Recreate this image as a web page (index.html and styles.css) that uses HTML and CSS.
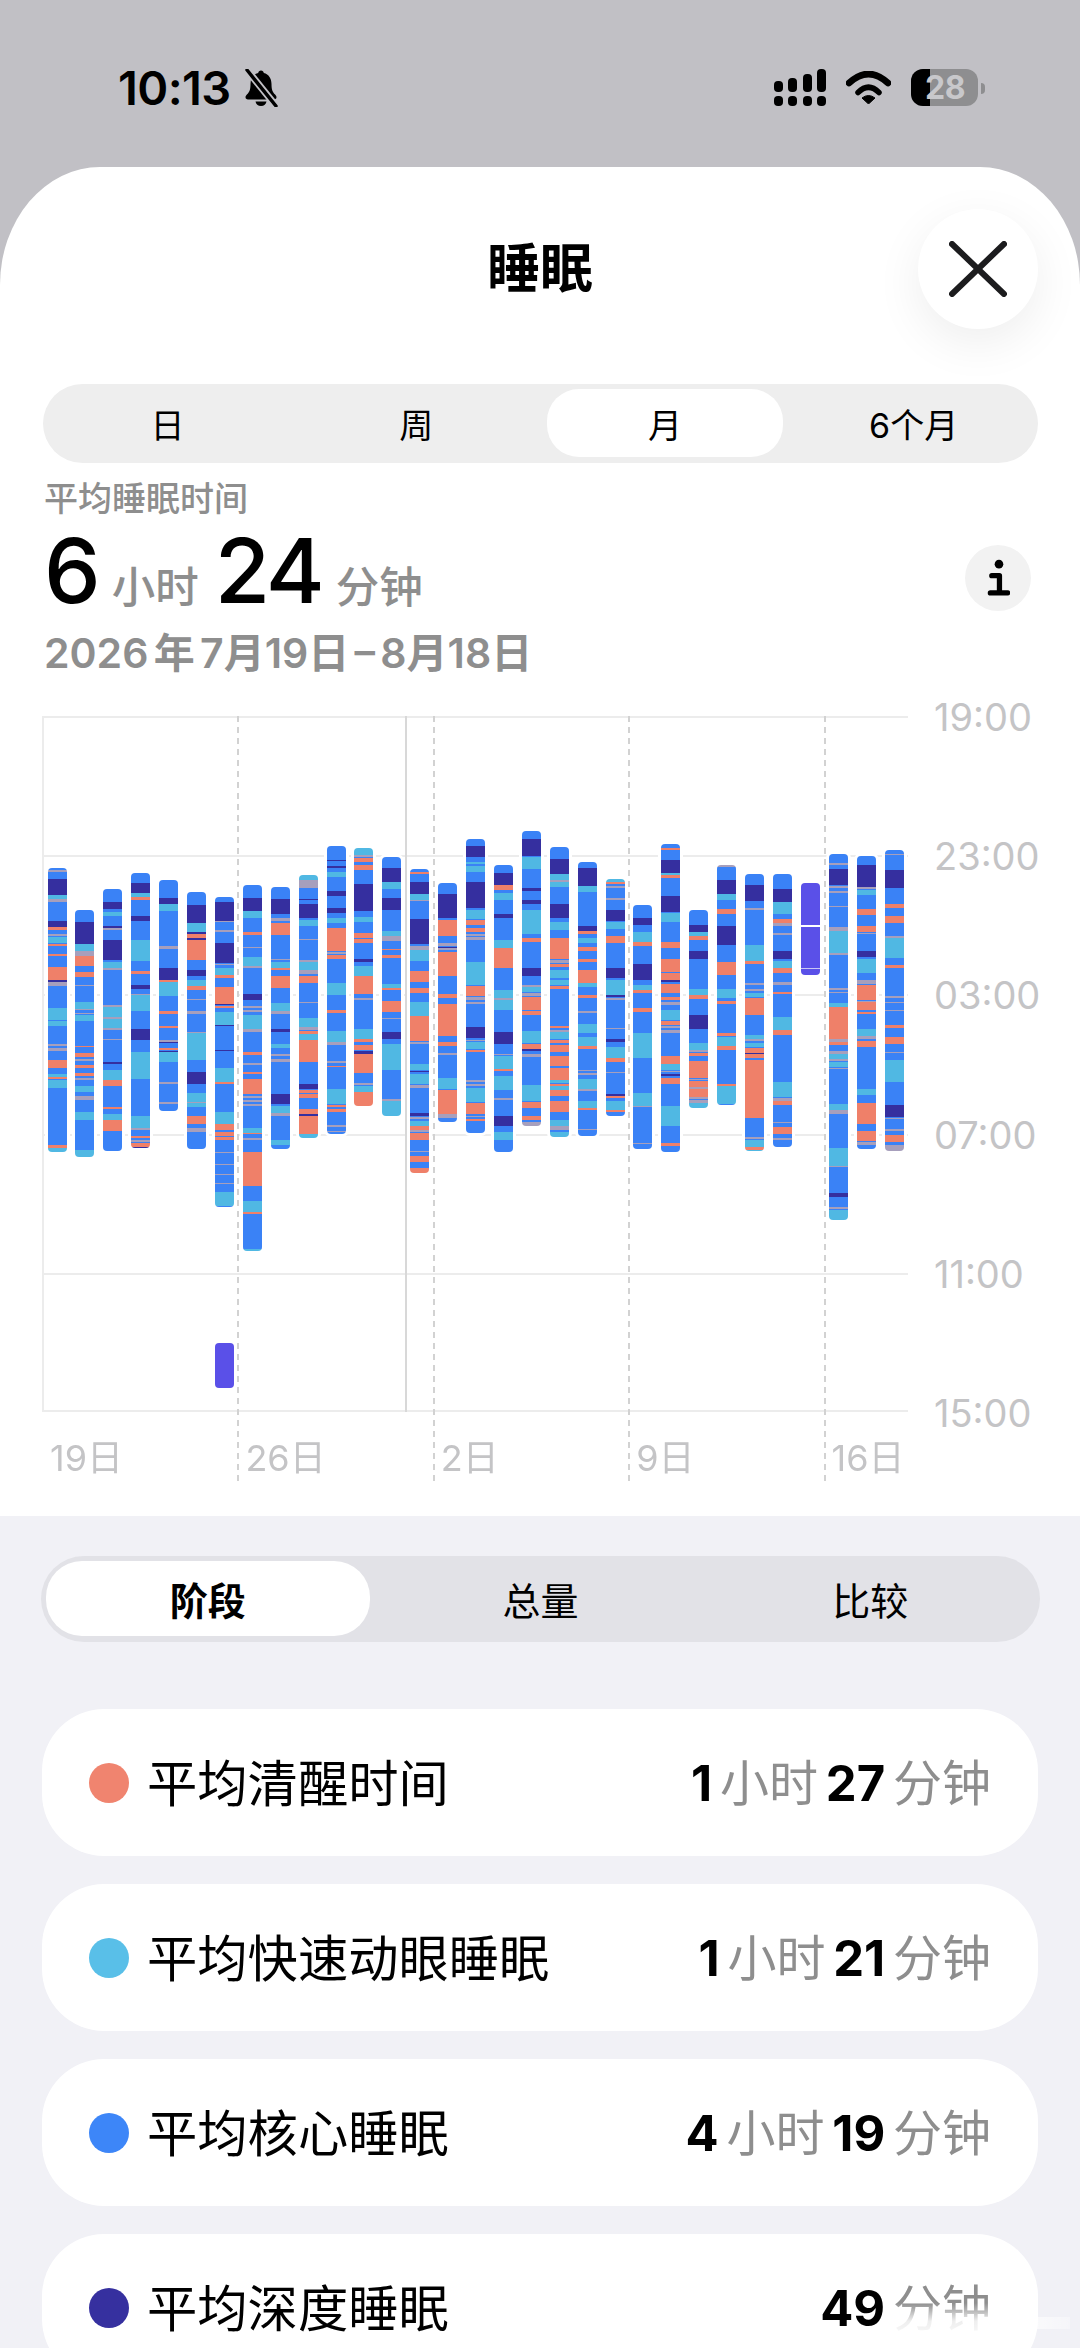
FILE: index.html
```html
<!DOCTYPE html>
<html lang="zh">
<head>
  <meta charset="UTF-8">
  <title>睡眠</title>
  <link rel="stylesheet" href="styles.css">
</head>
<body>
  <div class="statusbar">
    <div class="status-left">
      <span class="clock">10:13</span>
      <svg class="bell" viewBox="0 0 38 38">
        <path d="M19 1.500c1.600 0 2.600 1 2.800 2.400 5 1.300 7.700 5.400 7.700 11 0 6.100 1.300 8.200 3.600 10.600.9.900 1.400 1.900 1.400 2.700 0 1.300-1 2.200-2.500 2.200H6c-1.500 0-2.500-.9-2.500-2.200 0-.8.500-1.800 1.400-2.700 2.300-2.400 3.600-4.500 3.600-10.600 0-5.600 2.700-9.700 7.700-11 .2-1.400 1.200-2.400 2.800-2.400z" fill="#000"/>
        <path d="M13.500 32.500h11c-.3 2.700-2.500 4.500-5.500 4.500s-5.200-1.800-5.500-4.500z" fill="#000"/>
        <path d="M5 1l29 36" stroke="#c1c0c5" stroke-width="7"/>
        <path d="M5 1l29 36" stroke="#000" stroke-width="3.400" stroke-linecap="round"/>
      </svg>
    </div>
    <div class="status-right">
      <div class="signal">
        <div class="signal-bars"><i class="s1"></i><i class="s2"></i><i class="s3"></i><i class="s4"></i></div>
        <div class="signal-dots"><i></i><i></i><i></i><i></i></div>
      </div>
      <svg class="wifi" viewBox="0 0 45 33">
        <path d="M3 12Q22.500-6 42 12" fill="none" stroke="#000" stroke-width="6.500" stroke-linecap="round"/>
        <path d="M12 21.500Q22.500 11 33 21.500" fill="none" stroke="#000" stroke-width="5.500" stroke-linecap="round"/>
        <path d="M16 27Q22.500 22 29 27L22.500 33z" fill="#000" stroke="#000" stroke-linejoin="round"/>
      </svg>
      <div class="battery">
        <div class="battery-fill"></div>
        <span class="battery-num">28</span>
      </div>
      <div class="battery-cap"></div>
    </div>
  </div>

  <div class="sheet">
    <div class="sheet-head">
      <div></div>
      <h1 class="sheet-title">睡眠</h1>
      <button class="close-btn">
        <svg viewBox="0 0 58 56"><path d="M3 3l52 50M55 3L3 53" fill="none" stroke="#1c1c1e" stroke-width="6" stroke-linecap="round"/></svg>
      </button>
    </div>

    <div class="range-tabs">
      <div class="range-tab">日</div>
      <div class="range-tab">周</div>
      <div class="range-tab active">月</div>
      <div class="range-tab">6个月</div>
    </div>

    <div class="summary">
      <div class="summary-text">
        <div class="summary-label">平均睡眠时间</div>
        <div class="summary-value"><b>6</b><span>小时</span><b>24</b><span>分钟</span></div>
        <div class="summary-date">2026 年 7月19日 – 8月18日</div>
      </div>
      <button class="info-btn">
        <svg viewBox="0 0 24 40"><circle cx="12.500" cy="5" r="4.500" fill="#000"/><path d="M5 17h8v17M3.500 35h18" fill="none" stroke="#000" stroke-width="5.500" stroke-linecap="round" stroke-linejoin="round"/></svg>
      </button>
    </div>

    <div class="chart">
      <div class="plot">
        <div class="hline"></div>
        <div class="hline"></div>
        <div class="hline"></div>
        <div class="hline"></div>
        <div class="hline last"></div>
        <div class="today-line"></div>
        <div class="bars" id="bars"></div>
        <div class="weeks">
          <div class="week"></div>
          <div class="week dashed"></div>
          <div class="week dashed"></div>
          <div class="week dashed"></div>
          <div class="week dashed"></div>
        </div>
        <div class="xaxis">
          <span>19日</span>
          <span>26日</span>
          <span>2日</span>
          <span>9日</span>
          <span>16日</span>
        </div>
      </div>
      <div class="yaxis">
        <span>19:00</span>
        <span>23:00</span>
        <span>03:00</span>
        <span>07:00</span>
        <span>11:00</span>
        <span>15:00</span>
      </div>
    </div>
  </div>

  <div class="lower">
    <div class="view-tabs">
      <div class="view-tab active">阶段</div>
      <div class="view-tab">总量</div>
      <div class="view-tab">比较</div>
    </div>

    <div class="stage-row">
      <i class="dot salmon"></i>
      <span class="stage-name">平均清醒时间</span>
      <span class="stage-time"><b>1</b> 小时 <b>27</b> 分钟</span>
    </div>
    <div class="stage-row">
      <i class="dot cyan"></i>
      <span class="stage-name">平均快速动眼睡眠</span>
      <span class="stage-time"><b>1</b> 小时 <b>21</b> 分钟</span>
    </div>
    <div class="stage-row">
      <i class="dot blue"></i>
      <span class="stage-name">平均核心睡眠</span>
      <span class="stage-time"><b>4</b> 小时 <b>19</b> 分钟</span>
    </div>
    <div class="stage-row">
      <i class="dot navy"></i>
      <span class="stage-name">平均深度睡眠</span>
      <span class="stage-time"><b>49</b> 分钟</span>
    </div>

    <!-- image host's faded mark across the bottom corner -->
    <div class="corner-fade"></div>
    <div class="corner-streak"></div>
  </div>

  <script src="app.js"></script>
</body>
</html>
```

FILE: styles.css
```css
* {
  box-sizing: border-box;
}

html, body {
  margin: 0;
  padding: 0;
}

body {
  width: 1080px;
  height: 2348px;
  overflow: hidden;
  background: #c1c0c5;
  color: #000;
  font-family: Inter, "Noto Sans CJK SC", sans-serif;
}

button {
  border: none;
  padding: 0;
  cursor: pointer;
}

/* status bar */
.statusbar {
  height: 167px;
  display: flex;
  justify-content: space-between;
  padding: 69px 95px 0 118px;
}

.status-left {
  display: flex;
  align-items: flex-start;
  gap: 11px;
}

.clock {
  font-size: 47px;
  line-height: 38px;
  font-weight: 600;
  letter-spacing: -0.6px;
}

.bell {
  width: 38px;
  height: 38px;
}

.status-right {
  display: flex;
  align-items: flex-start;
}

.signal {
  width: 52px;
  margin-right: 20px;
}

.signal-bars {
  display: flex;
  justify-content: space-between;
  align-items: flex-end;
  height: 23px;
}

.signal-bars i {
  width: 9px;
  background: #000;
  border-radius: 4px;
}

.s1 { height: 11px; }
.s2 { height: 14px; }
.s3 { height: 18px; }
.s4 { height: 23px; }

.signal-dots {
  display: flex;
  justify-content: space-between;
  margin-top: 4px;
}

.signal-dots i {
  width: 9px;
  height: 10px;
  background: #000;
  border-radius: 4px;
}

.wifi {
  width: 45px;
  height: 33px;
  margin: 2px 20px 0 0;
}

.battery {
  position: relative;
  width: 67px;
  height: 37px;
  background: #8e8e90;
  border-radius: 12px;
  overflow: hidden;
}

.battery-fill {
  width: 19px;
  height: 100%;
  background: #000;
}

.battery-num {
  position: absolute;
  top: 0;
  left: 14px;
  font-size: 32px;
  line-height: 37px;
  font-weight: 700;
  letter-spacing: -0.5px;
  color: #c8c8cb;
}

.battery-cap {
  width: 4px;
  height: 11px;
  margin: 14px 0 0 3px;
  background: #8e8e90;
  border-radius: 0 4px 4px 0;
}

/* white sheet */
.sheet {
  height: 1349px;
  background: #fff;
  border-radius: 100px 100px 0 0 / 118px 118px 0 0;
}

.sheet-head {
  display: grid;
  grid-template-columns: 1fr auto 1fr;
  align-items: center;
  align-content: start;
  padding: 42px 42px 0;
  height: 217px;
}

.sheet-title {
  margin: 0;
  font-size: 53px;
  line-height: 120px;
  font-weight: 700;
}

.close-btn {
  justify-self: end;
  width: 120px;
  height: 120px;
  display: flex;
  align-items: center;
  justify-content: center;
  background: #fff;
  border-radius: 50%;
  box-shadow: 0 14px 48px rgba(0, 0, 0, 0.07);
}

.close-btn svg {
  width: 58px;
  height: 56px;
}

.range-tabs {
  display: grid;
  grid-template-columns: repeat(4, 1fr);
  height: 79px;
  margin: 0 42px 0 43px;
  padding: 5px 0 6px;
  background: #eeeeee;
  border-radius: 40px;
}

.range-tab {
  display: flex;
  align-items: center;
  justify-content: center;
  font-size: 34px;
  margin: 0 6px;
  border-radius: 32px;
}

.range-tab.active {
  background: #fff;
}

/* summary block */
.summary {
  display: flex;
  justify-content: space-between;
  padding: 17px 49px 0 44px;
  height: 253px;
}

.summary-label {
  font-size: 34px;
  line-height: 38px;
  font-weight: 500;
  color: #8e8e8e;
}

.summary-value {
  display: flex;
  align-items: baseline;
  height: 106px;
  line-height: 106px;
}

.summary-value b {
  font-size: 90px;
  font-weight: 500;
  letter-spacing: -3px;
}

.summary-value span {
  font-size: 43.5px;
  font-weight: 500;
  color: #8e8e8e;
  margin: 0 16px 0 14px;
}

.summary-date {
  margin-top: 6px;
  font-size: 41px;
  line-height: 46px;
  font-weight: 600;
  color: #8e8e8e;
  white-space: pre;
  word-spacing: -5px;
}

.info-btn {
  width: 66px;
  height: 66px;
  margin-top: 65px;
  display: flex;
  align-items: center;
  justify-content: center;
  background: #f2f2f2;
  border-radius: 50%;
}

.info-btn svg {
  width: 23px;
  height: 39px;
}

/* chart */
.chart {
  display: flex;
  margin-left: 42px;
}

.plot {
  position: relative;
  width: 866px;
  height: 696px;
  border-left: 2px solid #ececec;
}

.hline {
  height: 139.2px;
  border-top: 2px solid #ececec;
}

.hline.last {
  border-bottom: 2px solid #ececec;
}

.today-line {
  position: absolute;
  top: 0;
  left: 361px;
  width: 2px;
  height: 696px;
  background: #d8d8d8;
}

.bars {
  position: absolute;
  top: 0;
  left: -2px;
  filter: blur(0.4px);
}

.bar {
  position: absolute;
  width: 19px;
  border-radius: 4px;
  box-shadow: 0 0 0 3px #fff;
}

.weeks {
  position: absolute;
  top: 0;
  left: -2px;
  height: 767px;
  display: grid;
  grid-template-columns: repeat(4, 195.4px) 84px;
}

.week.dashed {
  background: repeating-linear-gradient(#d2d2d2 0 6px, transparent 6px 11px) left top / 2px 100% no-repeat;
}

.xaxis {
  position: absolute;
  top: 727px;
  left: -2px;
  display: grid;
  grid-template-columns: repeat(4, 195.4px) 84px;
  font-size: 36px;
  line-height: 30px;
  color: #c4c4c6;
  white-space: nowrap;
}

.xaxis span {
  padding-left: 8px;
}

.yaxis {
  display: flex;
  flex-direction: column;
  margin-left: 26px;
  font-size: 38px;
  color: #c4c4c6;
}

.yaxis span {
  height: 139.2px;
  line-height: 2px;
}

/* lower gray part */
.lower {
  position: relative;
  height: 832px;
  padding: 40px 42px 0;
  background: #f1f1f6;
}

.view-tabs {
  display: grid;
  grid-template-columns: repeat(3, 1fr);
  height: 86px;
  margin: 0 -2px 67px -1px;
  padding: 5px 5px 6px;
  background: #e2e2e7;
  border-radius: 43px;
}

.view-tab {
  display: flex;
  align-items: center;
  justify-content: center;
  font-size: 38px;
  border-radius: 36px;
}

.view-tab.active {
  font-weight: 700;
  background: #fff;
  margin-right: 6px;
}

.stage-row {
  display: flex;
  align-items: center;
  height: 147px;
  margin-bottom: 28px;
  padding: 0 47px 6px 47px;
  background: #fff;
  border-radius: 62px;
}

.dot {
  width: 40px;
  height: 40px;
  margin: 6px 18px 0 0;
  border-radius: 50%;
}

.salmon { background: #f0846f; }
.cyan { background: #59bfe8; }
.blue { background: #3d86f8; }
.navy { background: #36309f; }

.stage-name {
  flex: 1;
  font-size: 50.3px;
}

.stage-time {
  font-size: 49px;
  color: #8e8e8e;
  word-spacing: -6px;
}

.stage-time b {
  font-weight: 700;
  color: #000;
}

/* overlay on the last row, screenshot was re-shared with a mark here */
.corner-fade {
  position: absolute;
  left: 890px;
  top: 787px;
  width: 110px;
  height: 40px;
  background: linear-gradient(rgba(255, 255, 255, 0), rgba(255, 255, 255, 0.85) 45%, #fff);
}

.corner-streak {
  position: absolute;
  left: 1000px;
  top: 801px;
  width: 70px;
  height: 12px;
  background: linear-gradient(90deg, #fff, rgba(255, 255, 255, 0.3));
}
```

FILE: app.js
```js
// sleep stage chart, values are in "crop units": 1px = 1/3 screen px, y origin at 830
const colors = {
  b: '#3a82f6',
  d: '#352f9f',
  c: '#50b8e3',
  s: '#ef8069',
  g: '#a79fbc',
  n: '#5a50e8',
  w: '#ffffff',
  l: '#c9c6f4'
};

const bars = [
  [115, 967, 'g122-126 d148-195 c195-208 g208-216 d273-292 s292-300 g312-320 c322-340 s342-348 s372-378 s412-450 d450-458 g458-468 c535-572 c575-590 g643-650 g655-663 s690-715 c733-742 s742-748 c750-775 s946-955 c955-967'],
  [240, 980, 'd276-343 c343-362 g362-378 s378-408 s426-440 g465-469 c516-536 g536-540 g548-552 c556-572 s648-652 s670-680 g686-694 s704-714 s728-738 g744-750 c768-785 g798-810 c846-871 c960-980'],
  [178, 963, 'd218-238 c246-260 d288-296 g296-302 d330-390 c398-415 g415-420 g525-531 c531-563 g563-567 c567-596 g596-600 g628-632 d697-702 c720-750 s750-768 s833-838 c852-872 s872-904'],
  [129, 954, 'd158-190 c190-200 s202-210 d257-273 c330-392 s424-432 d464-478 g492-496 c496-544 d596-630 c666-748 c858-895 g895-900 s918-925 g930-936 s940-950 d950-954'],
  [151, 844, 'd206-222 c222-245 g350-358 d415-450 s450-457 c458-498 s545-553 s588-596 g630-636 d636-640 s654-662 d664-668 c668-696 g757-762 g816-822'],
  [185, 958, 'd225-278 c278-304 d304-312 s312-324 d324-330 s330-388 d420-436 c450-466 s466-478 g505-510 g541-552 g604-608 c608-688 d726-762 c788-815 g815-819 c819-830 s858-880 g894-904'],
  [202, 1130, 'd216-274 g274-278 g302-306 d340-400 g402-406 c415-436 s436-446 s472-522 d522-526 s528-534 c548-586 d586-588 d660-664 c714-756 s756-762 c848-882 s882-900 s906-918 s922-930 g967-970 g1002-1006 g1032-1036 g1060-1064 c1086-1130'],
  [164, 1262, 'd204-242 c242-262 s306-314 g350-354 c380-408 g408-414 d492-508 g528-534 g538-544 c554-596 g596-604 s664-674 g698-704 s724-732 s746-792 g796-804 g808-816 g822-826 c892-908 s908-912 g924-928 s966-1066 c1112-1146 s1146-1152 c1255-1262'],
  [170, 958, 'd206-250 g262-272 s278-315 g386-390 c396-414 s414-420 s438-474 c518-542 g542-550 d596-606 c640-654 g670-676 g685-695 d792-822 c828-848 g848-858 c930-945'],
  [134, 925, 'c134-150 g150-172 d207-210 d222-262 c268-288 g326-330 g390-394 c396-420 g420-430 s437-458 g514-519 c564-590 g590-598 s602-610 c612-630 s630-695 d762-775 s780-788 s792-802 s835-852 d852-858 s858-912 c912-925'],
  [48, 913, 'd90-94 d108-114 c126-142 d184-198 d234-250 c264-280 s294-364 g366-372 s374-386 c460-495 s540-548 c604-636 g636-644 g694-698 s708-712 c778-822 s824-832 s838-846 g886-890 g902-906'],
  [54, 827, 'c54-76 g76-82 s84-96 s106-120 d162-243 c260-276 s310-325 s328-340 d386-396 c408-438 s438-492 g504-510 c596-626 s628-636 s646-660 d662-672 s672-728 g758-766 c768-786 s786-827'],
  [82, 858, 'd114-158 c158-178 d206-240 c304-320 g320-334 s358-362 s376-386 c462-476 s476-480 s514-546 g564-568 d606-628 c642-720 g808-814 c814-858'],
  [116, 1028, 's125-132 d156-190 c190-208 g208-212 d266-342 g348-358 c358-392 s422-456 s474-488 c516-556 s556-632 g634-640 c700-720 d722-726 c730-762 g764-772 d848-856 g860-866 c872-886 s888-898 g898-904 s908-928 g962-966 s978-995 s1014-1028'],
  [158, 877, 'd192-262 s268-316 g338-348 d350-354 g354-360 s364-438 s492-504 s520-618 s636-646 g668-674 c744-776 s778-850 g852-862'],
  [28, 908, 'd48-82 c96-104 c108-126 d158-234 c242-268 s270-286 s296-306 g312-318 g322-332 c398-465 s470-498 g502-512 g516-524 d592-626 g630-634 c636-658 s660-666 g752-756 g762-770 c774-818 s820-854 g858-862 s868-875'],
  [106, 965, 'd130-165 s165-180 c190-210 d252-264 c330-355 s355-415 c480-506 g506-510 c510-542 d606-642 g672-676 c678-718 s718-724 c738-780 g806-810 d858-890 c906-930'],
  [3, 888, 'd28-78 c82-118 d174-184 d210-222 c240-312 s325-337 d415-438 g466-470 c472-486 g490-498 s500-540 s544-555 c604-640 s642-656 d658-662 g672-682 c764-814 s816-824 s826-834 s858-870 g876-888'],
  [52, 922, 'd88-132 c132-152 g152-158 c158-172 d222-266 c278-300 s325-388 g390-400 s402-412 c422-446 c450-466 s468-478 s588-596 g600-606 c608-628 s630-640 s646-666 s678-710 s716-750 c750-760 s762-770 c770-780 s782-798 s814-848 c872-890 g890-900 c908-922'],
  [96, 917, 'd114-168 c168-186 d288-304 s304-312 c324-340 s352-364 s386-396 s420-458 c458-470 s496-504 g544-548 c582-610 c622-648 s648-656 g720-724 g730-734 c748-776 g776-782 c812-834 s834-840 g896-900'],
  [146, 857, 'c146-155 s155-162 g168-172 g204-208 d238-272 c274-296 s316-338 d412-442 c450-495 d495-500 g502-508 g592-596 d626-634 c650-682 s684-696 g725-729 d792-798 s798-804 c812-838 s838-846'],
  [226, 958, 'd264-286 c306-336 s336-350 d404-450 c465-482 s482-490 s534-546 c610-684 c790-828 g828-832 g940-944'],
  [43, 965, 's54-62 d90-130 c130-136 s136-146 d198-246 c250-276 s338-354 s388-426 s430-450 d452-458 s462-490 s502-512 g516-526 c540-572 s574-586 g590-596 g600-610 s680-702 c704-720 g724-728 d732-738 s746-764 c828-890 s940-950'],
  [240, 833, 'd286-306 c306-318 s318-330 d364-388 c478-496 s496-508 d555-596 c640-660 g660-666 s670-678 s694-745 g746-750 s752-770 g770-778 s778-800 g802-808 g810-820 c820-833'],
  [106, 824, 'g106-112 d152-192 c192-210 s237-252 d288-346 s398-437 c478-505 s513-523 s610-620 c622-650 s650-662 s763-770 c770-824'],
  [132, 963, 'd165-212 g234-240 c346-392 s392-402 g460-466 g476-482 c488-500 s504-554 c616-628 g628-634 c638-650 s654-668 d668-672 s672-684 s690-864 g920-926 c930-952 s952-960 c960-963'],
  [132, 950, 'd177-216 c216-252 s266-278 g280-288 g308-314 d362-388 c394-414 s414-428 g456-464 s486-492 c560-600 s600-615 c757-802 g804-812 s814-826 g876-880 s892-912 g924-930'],
  [160, 435, 'w286-291 l414-418', 'n'],
  [72, 1170, 'g100-105 d117-165 g167-174 g184-188 g228-232 g292-302 c303-368 g368-374 g474-480 g486-490 c518-530 s530-626 g628-636 s636-646 g664-672 c672-686 g688-694 c696-712 g714-718 c822-840 g840-852 c954-1008 g1008-1012 d1088-1100 g1130-1138 c1140-1170'],
  [78, 958, 'd106-172 g172-178 c180-196 s236-254 s288-306 g308-312 d362-382 c386-430 g450-462 s464-510 g512-516 s516-540 s545-553 c596-618 g618-626 s632-650 c776-794 s820-882 s904-934 g936-946'],
  [61, 963, 'g74-76 d120-174 s222-234 s260-280 g318-324 c324-386 s406-414 g500-504 g516-520 g540-544 s586-594 s622-642 g666-670 c690-756 d826-862 g864-868 g898-904 s916-938 g946-963']
];

// second nap on the 25th
const extras = [
  [6, 1539, 1674, '', 'n']
];

const chartTop = 716;
const barsEl = document.getElementById('bars');

function addBar(index, top, bottom, spec, base) {
  const baseColor = colors[base || 'b'];
  const stops = [];
  let pos = top;
  for (const part of spec.matchAll(/([a-z])(\d+)-(\d+)/g)) {
    const start = Math.max(Number(part[2]), pos);
    const end = Number(part[3]);
    const from = ((start - top) / 3).toFixed(1);
    const to = ((end - top) / 3).toFixed(1);
    const prev = ((pos - top) / 3).toFixed(1);
    if (start > pos) stops.push(`${baseColor} ${prev}px ${from}px`);
    stops.push(`${colors[part[1]]} ${from}px ${to}px`);
    pos = end;
  }
  stops.push(`${baseColor} ${((pos - top) / 3).toFixed(1)}px 100%`);

  const el = document.createElement('div');
  el.className = 'bar';
  el.style.left = (47.5 - 42 + 27.9 * index).toFixed(1) + 'px';
  el.style.top = (830 + top / 3 - chartTop).toFixed(1) + 'px';
  el.style.height = ((bottom - top) / 3).toFixed(1) + 'px';
  el.style.background = `linear-gradient(${stops.join(', ')})`;
  barsEl.appendChild(el);
}

bars.forEach((b, i) => addBar(i, b[0], b[1], b[2], b[3]));
extras.forEach(e => addBar(e[0], e[1], e[2], e[3], e[4]));
```
